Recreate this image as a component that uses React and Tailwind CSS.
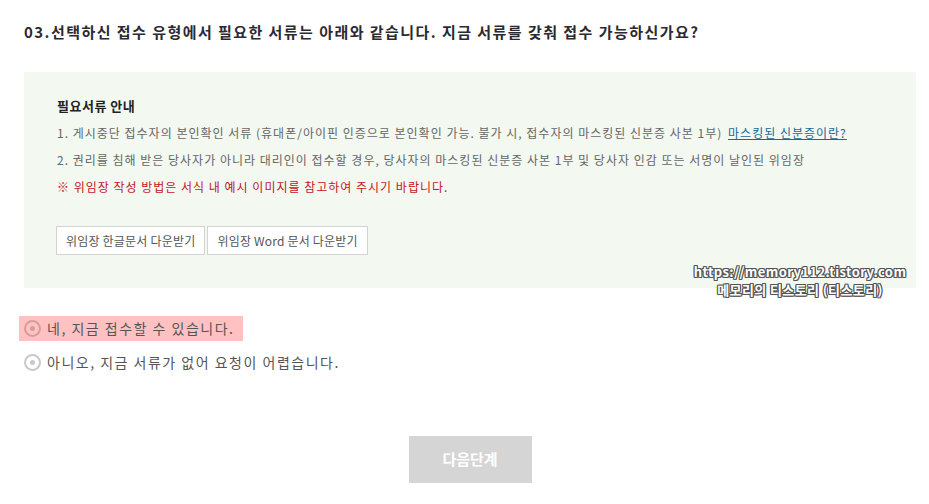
import React, { useState } from "react";

const font = "font-['Noto_Sans_CJK_KR','Noto_Sans',sans-serif]";

function Radio({ checked, label, onClick }) {
  return (
    <button
      type="button"
      onClick={onClick}
      className={`flex items-center gap-[6px] h-[25px] pl-[5px] pr-[8px] text-[14px] text-[#555] ${
        checked ? "bg-[#ffc1c1]" : ""
      }`}
    >
      <span
        className={`w-[17px] h-[17px] rounded-full border-2 flex items-center justify-center ${
          checked ? "border-[#d79c9c]" : "border-[#c8c8c8]"
        }`}
      >
        <span className={`w-[5px] h-[5px] rounded-full ${checked ? "bg-[#d79c9c]" : "bg-[#c8c8c8]"}`} />
      </span>
      <span className="tracking-[1.5px]">{label}</span>
    </button>
  );
}

export default function App() {
  const [choice, setChoice] = useState(0);

  return (
    <div className={`relative w-[929px] h-[504px] bg-white pl-6 pr-[13px] ${font}`}>
      <h2 className="pt-[21px] text-[15px] font-bold text-[#2a2a33] leading-[22px] tracking-[1.45px]">
        03.선택하신 접수 유형에서 필요한 서류는 아래와 같습니다. 지금 서류를 갖춰 접수 가능하신가요?
      </h2>

      <div className="mt-[29px] bg-[#f3f8f1] pl-[33px] pt-[24px] pb-[33px]">
        <h3 className="text-[13px] font-bold text-[#222] leading-[20px] tracking-[0.5px]">필요서류 안내</h3>
        <ul className="mt-[7px] space-y-[7px] text-[12px] leading-[20px] text-[#666] tracking-[1px]">
          <li>
            1. 게시중단 접수자의 본인확인 서류 (휴대폰/아이핀 인증으로 본인확인 가능. 불가 시, 접수자의 마스킹된 신분증 사본 1부){" "}
            <a href="#" className="ml-[2px] text-[#17699a] underline">
              마스킹된 신분증이란?
            </a>
          </li>
          <li>2. 권리를 침해 받은 당사자가 아니라 대리인이 접수할 경우, 당사자의 마스킹된 신분증 사본 1부 및 당사자 인감 또는 서명이 날인된 위임장</li>
          <li className="text-[#c4161c]">※ 위임장 작성 방법은 서식 내 예시 이미지를 참고하여 주시기 바랍니다.</li>
        </ul>
        <div className="mt-[29px] flex gap-[2px] -ml-[1px]">
          <button className="h-[29px] px-[9px] border border-[#d3d3d3] bg-white text-[12px] text-[#555] tracking-[0.2px]">
            위임장 한글문서 다운받기
          </button>
          <button className="h-[29px] px-[9px] border border-[#d3d3d3] bg-white text-[12px] text-[#555] tracking-[0.2px]">
            위임장 Word 문서 다운받기
          </button>
        </div>
      </div>

      <div className="mt-[28px] -ml-[5px] flex flex-col items-start gap-[9px]">
        <Radio checked={choice === 0} label="네, 지금 접수할 수 있습니다." onClick={() => setChoice(0)} />
        <Radio checked={choice === 1} label="아니오, 지금 서류가 없어 요청이 어렵습니다." onClick={() => setChoice(1)} />
      </div>

      <div className="mt-[61px] flex justify-center">
        <button className="w-[123px] h-[47px] bg-[#d5d5d5] text-white text-[15px] font-bold">다음단계</button>
      </div>

      <div className="absolute left-[693px] top-[263px] w-[214px] flex flex-col gap-[1px] text-center text-[13px] leading-[17px] font-bold text-white tracking-[0.4px] [text-shadow:1px_0_0_#555,-1px_0_0_#555,0_1px_0_#555,0_-1px_0_#555,1px_1px_0_#555,-1px_-1px_0_#555,1px_-1px_0_#555,-1px_1px_0_#555]">
        <span>https://memory112.tistory.com</span>
        <span>메모리의 티스토리 (티스토리)</span>
      </div>
    </div>
  );
}
